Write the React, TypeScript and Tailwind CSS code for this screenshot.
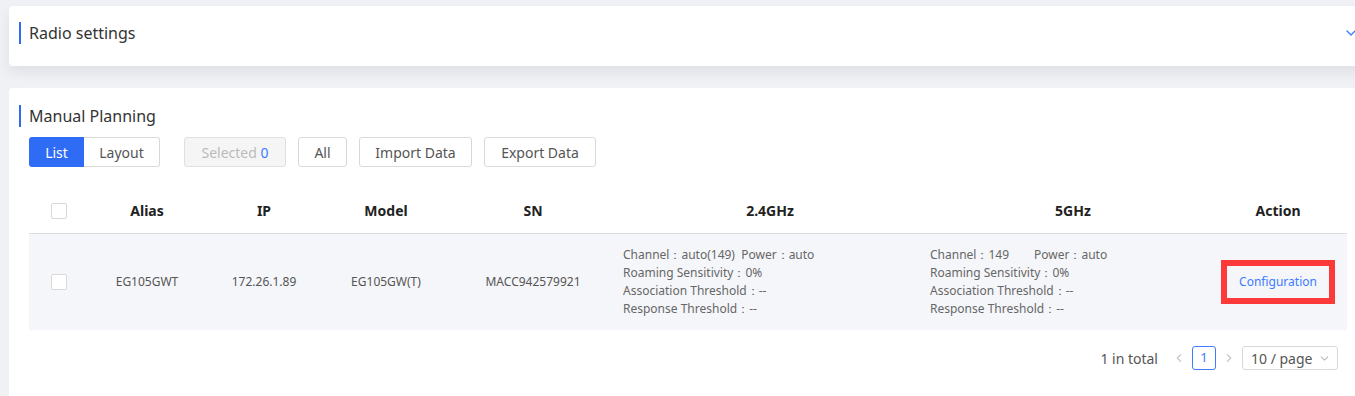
import React from 'react';
import { ChevronDown, ChevronLeft, ChevronRight } from 'lucide-react';

const cols = 'grid grid-cols-[60px_116px_118px_126px_168px_306px_300px_124px]';

const Checkbox: React.FC = () => (
  <span className="inline-block w-4 h-4 rounded-[2px] border border-[#d9d9d9] bg-white" />
);

const SectionTitle: React.FC<{ text: string }> = ({ text }) => (
  <div className="flex items-center">
    <span className="w-[2px] h-[22px] bg-[#2f6cf6] mr-2" />
    <span className="text-[16px] leading-6 text-[#333]">{text}</span>
  </div>
);

const Detail: React.FC<{ lines: React.ReactNode[] }> = ({ lines }) => (
  <div className="text-[12px] leading-[18px] text-[#666]">
    {lines.map((l, i) => (
      <div key={i} className="whitespace-pre">{l}</div>
    ))}
  </div>
);

const App: React.FC = () => {
  return (
    <div className="w-[1355px] h-[396px] overflow-hidden bg-[#eff1f4] font-['Noto_Sans','Liberation_Sans',sans-serif]">
      <div className="w-[1380px] pl-[9px] pt-[6px]">
        <div className="w-[1358px] h-[60px] bg-white rounded-[4px] shadow-[0_6px_14px_rgba(0,0,0,0.07)] flex items-center justify-between pl-[10px] pr-2 pb-[6px]">
          <SectionTitle text="Radio settings" />
          <ChevronDown size={16} strokeWidth={2} className="text-[#3d7bff]" />
        </div>

        <div className="mt-[22px] w-[1358px] h-[320px] bg-white rounded-[4px] px-5 pt-4">
          <div className="-ml-[10px]">
            <SectionTitle text="Manual Planning" />
          </div>

          <div className="flex items-center mt-[9px] text-[14px]">
            <div className="flex h-[30px]">
              <button className="w-[55px] bg-[#2f6cf6] text-white rounded-l-[3px]">List</button>
              <button className="w-[76px] border border-[#d9d9d9] border-l-0 text-[#555] rounded-r-[3px]">Layout</button>
            </div>
            <button className="ml-6 w-[102px] h-[30px] bg-[#f5f5f5] border border-[#e0e0e0] rounded-[3px] text-[#bbb]">
              Selected <span className="text-[#3d7bff]">0</span>
            </button>
            <button className="ml-3 w-[49px] h-[30px] border border-[#d9d9d9] rounded-[3px] text-[#555]">All</button>
            <button className="ml-3 w-[113px] h-[30px] border border-[#d9d9d9] rounded-[3px] text-[#555]">Import Data</button>
            <button className="ml-3 w-[112px] h-[30px] border border-[#d9d9d9] rounded-[3px] text-[#555]">Export Data</button>
          </div>

          <div className="mt-[21px]">
            <div className={`${cols} h-[46px] items-center border-b border-[#dcdcdc] text-[14px] font-bold text-[#222] text-center`}>
              <div className="flex justify-center"><Checkbox /></div>
              <div>Alias</div>
              <div>IP</div>
              <div>Model</div>
              <div>SN</div>
              <div>2.4GHz</div>
              <div>5GHz</div>
              <div className="pr-[14px]">Action</div>
            </div>
            <div className={`${cols} h-[96px] items-center bg-[#f5f6fa] text-[12px] text-[#555] text-center`}>
              <div className="flex justify-center"><Checkbox /></div>
              <div>EG105GWT</div>
              <div>172.26.1.89</div>
              <div>EG105GW(T)</div>
              <div>MACC942579921</div>
              <div className="text-left pl-[6px]">
                <Detail
                  lines={[
                    'Channel：auto(149)  Power：auto',
                    'Roaming Sensitivity：0%',
                    'Association Threshold：--',
                    'Response Threshold：--',
                  ]}
                />
              </div>
              <div className="text-left pl-[7px]">
                <Detail
                  lines={[
                    'Channel：149        Power：auto',
                    'Roaming Sensitivity：0%',
                    'Association Threshold：--',
                    'Response Threshold：--',
                  ]}
                />
              </div>
              <div className="flex justify-center pr-[14px]">
                <span className="border-[6px] border-[#fd3a3a] px-[12px] py-[7px] text-[#3d7bff] leading-[18px]">
                  Configuration
                </span>
              </div>
            </div>
          </div>

          <div className="flex items-center justify-end mt-4 pr-[9px] text-[14px] text-[#555]">
            <span>1 in total</span>
            <ChevronLeft size={14} className="ml-[14px] text-[#c8c8c8]" />
            <span className="ml-[6px] w-6 h-6 flex items-center justify-center border border-[#3d7bff] rounded-[3px] text-[#3d7bff] text-[13px]">1</span>
            <ChevronRight size={14} className="ml-[6px] text-[#c8c8c8]" />
            <div className="ml-[6px] w-[96px] h-6 border border-[#d9d9d9] rounded-[3px] flex items-center justify-between pl-2 pr-1.5">
              <span>10 / page</span>
              <ChevronDown size={13} className="text-[#bbb]" />
            </div>
          </div>
        </div>
      </div>
    </div>
  );
};

export default App;
